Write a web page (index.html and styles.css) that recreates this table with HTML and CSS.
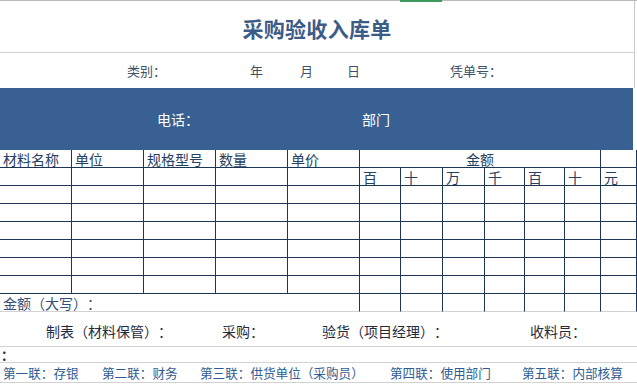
FILE: index.html
```html
<!DOCTYPE html>
<html lang="zh-CN">
<head>
<meta charset="utf-8">
<title>采购验收入库单</title>
<link rel="stylesheet" href="styles.css">
</head>
<body>
<div class="sheet">
  <div class="sel-mark"></div>
  <div class="title-row"><h1 class="title">采购验收入库单</h1></div>
  <div class="info-row">
    <span>类别：</span><span>年</span><span>月</span><span>日</span><span>凭单号：</span>
  </div>
  <div class="band">
    <span>电话：</span><span>部门</span>
  </div>
  <table class="grid">
    <colgroup>
      <col class="c72"><col class="c72"><col class="c72"><col class="c72"><col class="c72">
      <col class="c41"><col class="c42"><col class="c42"><col class="c40"><col class="c40"><col class="c36"><col class="c36">
    </colgroup>
    <tr>
      <td>材料名称</td><td>单位</td><td>规格型号</td><td>数量</td><td>单价</td>
      <td colspan="6" class="center">金额</td><td></td>
    </tr>
    <tr>
      <td></td><td></td><td></td><td></td><td></td>
      <td>百</td><td>十</td><td>万</td><td>千</td><td>百</td><td>十</td><td>元</td>
    </tr>
    <tr><td></td><td></td><td></td><td></td><td></td><td></td><td></td><td></td><td></td><td></td><td></td><td></td></tr>
    <tr><td></td><td></td><td></td><td></td><td></td><td></td><td></td><td></td><td></td><td></td><td></td><td></td></tr>
    <tr><td></td><td></td><td></td><td></td><td></td><td></td><td></td><td></td><td></td><td></td><td></td><td></td></tr>
    <tr><td></td><td></td><td></td><td></td><td></td><td></td><td></td><td></td><td></td><td></td><td></td><td></td></tr>
    <tr><td></td><td></td><td></td><td></td><td></td><td></td><td></td><td></td><td></td><td></td><td></td><td></td></tr>
    <tr><td></td><td></td><td></td><td></td><td></td><td></td><td></td><td></td><td></td><td></td><td></td><td></td></tr>
    <tr class="total">
      <td colspan="5" class="overflow">金额（大写）：</td>
      <td></td><td></td><td></td><td></td><td></td><td></td><td></td>
    </tr>
  </table>
  <div class="sign-row">
    <span>制表（材料保管）：</span><span>采购：</span><span>验货（项目经理）：</span><span>收料员：</span>
  </div>
  <div class="colon-row">：</div>
  <div class="foot-row">
    <span>第一联：存银</span><span>第二联：财务</span><span>第三联：供货单位（采购员）</span><span>第四联：使用部门</span><span>第五联：内部核算</span>
  </div>
</div>
</body>
</html>
```

FILE: styles.css
```css
* { box-sizing: border-box; }

html, body {
  margin: 0;
  padding: 0;
  background: #ffffff;
}

body {
  font-family: "Noto Sans CJK SC", "Noto Sans", sans-serif;
  text-spacing-trim: space-all;
  width: 637px;
  height: 385px;
  overflow: hidden;
}

.sheet {
  position: relative;
  width: 637px;
  border-top: 1px solid #b9b9b9;
}

.sel-mark {
  position: absolute;
  top: -1px;
  left: 400px;
  width: 42px;
  height: 2px;
  background: #3e9a5a;
}

.title-row {
  height: 52px;
  border-bottom: 1px solid #d2d2d2;
  border-right: 1px solid #c8c8c8;
  width: 635px;
  display: flex;
  align-items: center;
  justify-content: center;
  padding-top: 2px;
}

.title {
  margin: 0;
  font-size: 21px;
  font-weight: 700;
  line-height: 24px;
  color: #3c5b86;
  letter-spacing: 0.3px;
}

.info-row {
  height: 35px;
  width: 635px;
  border-right: 1px solid #c8c8c8;
  display: grid;
  grid-template-columns: 123px 50px 47px 103px auto;
  align-items: center;
  padding-left: 127px;
  font-size: 13px;
  line-height: 16px;
  color: #3f4f66;
  padding-top: 1px;
}

.band {
  height: 62px;
  width: 633px;
  background: #386092;
  display: grid;
  grid-template-columns: 205px auto;
  align-items: center;
  padding-left: 157px;
  font-size: 14px;
  line-height: 18px;
  color: #ffffff;
}

.grid {
  border-collapse: separate;
  border-spacing: 0;
  table-layout: fixed;
  width: 637px;
  font-size: 14px;
  color: #27405f;
}

.c72 { width: 72px; }
.c41 { width: 41px; }
.c42 { width: 42px; }
.c40 { width: 40px; }
.c36 { width: 36px; }

.grid td {
  height: 18px;
  padding: 0 0 0 3px;
  line-height: 16px;
  border-right: 1px solid #1e3656;
  border-bottom: 1px solid #1e3656;
  white-space: nowrap;
  overflow: visible;
  vertical-align: middle;
}

.grid td.center {
  text-align: center;
  padding-left: 0;
}

.grid tr.total td {
  border-bottom: 1px solid #d2d2d2;
  height: 18px;
}

.grid tr.total td.overflow {
  color: #34507a;
}

.sign-row {
  height: 35px;
  border-bottom: 1px solid #d2d2d2;
  display: grid;
  grid-template-columns: 176px 100px 208px auto;
  align-items: center;
  padding-left: 46px;
  padding-top: 4px;
  font-size: 14px;
  line-height: 18px;
  color: #1f2c3e;
}

.colon-row {
  height: 16px;
  border-bottom: 1px solid #d2d2d2;
  font-size: 13px;
  line-height: 15px;
  padding-left: 1px;
  color: #1f2c3e;
  font-weight: 700;
}

.foot-row {
  height: 20px;
  border-bottom: 1px solid #d2d2d2;
  display: grid;
  grid-template-columns: 99px 98px 190px 132px auto;
  align-items: center;
  padding-left: 3px;
  font-size: 12.6px;
  line-height: 16px;
  color: #2f5d93;
  white-space: nowrap;
}
```
